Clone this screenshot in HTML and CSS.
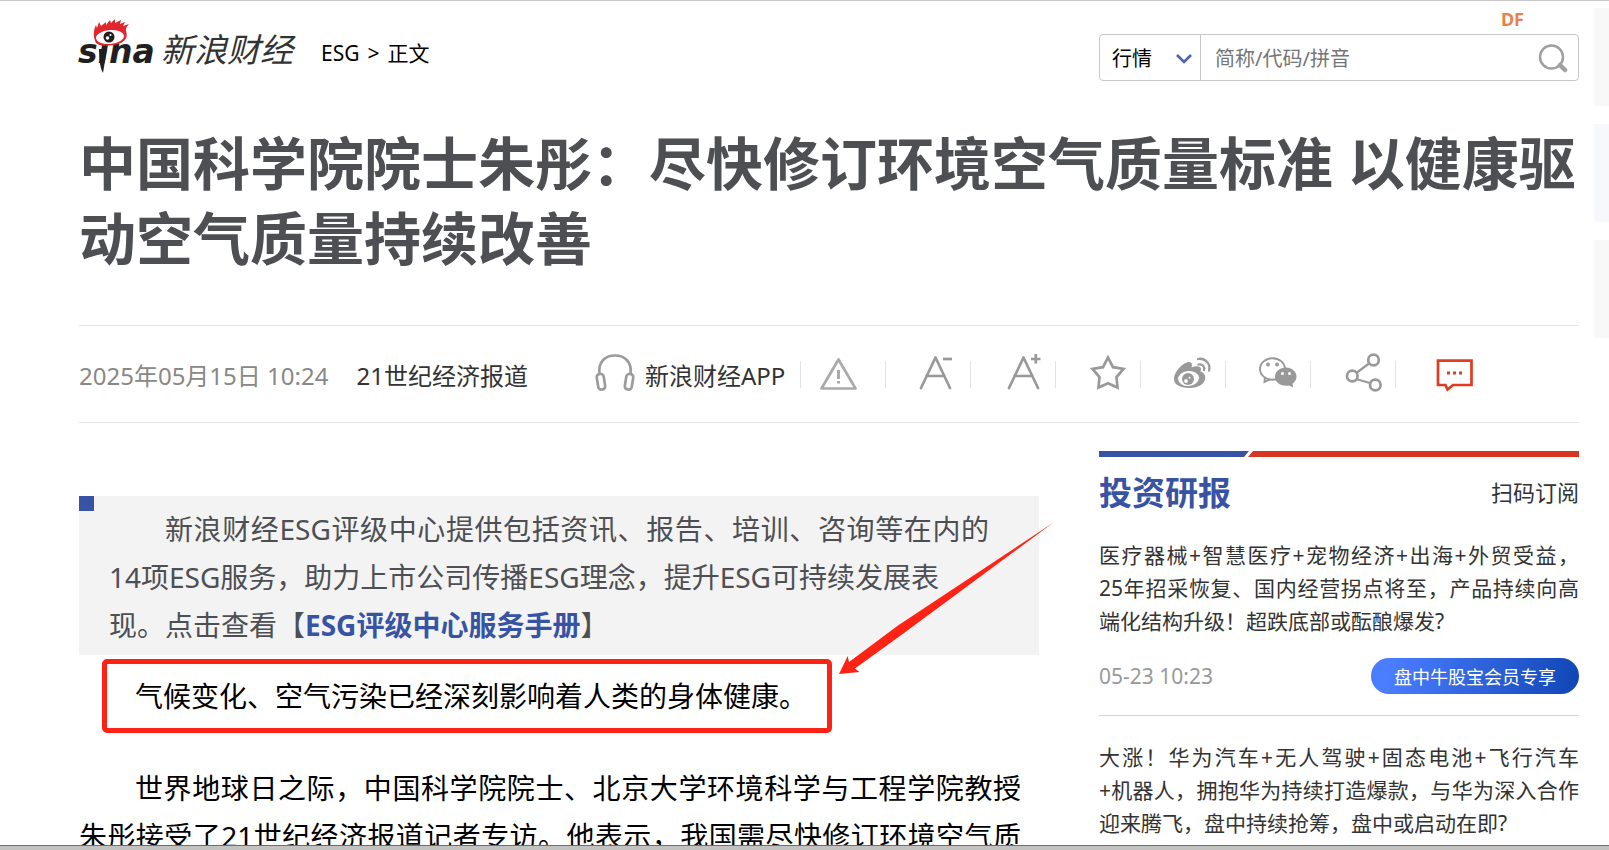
FILE: index.html
```html
<!DOCTYPE html>
<html lang="zh-CN">

<head>
    <meta charset="UTF-8">
    <meta name="viewport" content="width=device-width, initial-scale=1.0">
    <title>中国科学院院士朱彤：尽快修订环境空气质量标准 以健康驱动空气质量持续改善</title>
    <link rel="stylesheet" href="styles.css">
</head>

<body>

    <div class="page">
        <header class="header">
            <div class="brand">
                <a class="logo" href="#" aria-label="新浪财经">
                    <svg width="76" height="54" viewBox="0 0 76 54">
                        <text class="logo-text" x="-1" y="44">sina</text>
                        <path d="M20 30 L28 30 L24 54 Q20 48 20 30Z" fill="#231f20" />
                        <!-- eye -->
                        <path d="M17 24 C14 18 14 12 17 6 L18 9 L20 3 L22 7 L27 3 L27 6 L31 1 L32 4 L36 0 L36 4 L42 1 L41 5 L46 3 L44 7 L50 5 Q46 9 47 12 C50 20 44 26 30 26.500 C23 27 19 26 17 24Z" fill="#e1272c" />
                        <ellipse cx="31" cy="18" rx="14" ry="7" fill="#fff" transform="rotate(-5 31 18)" />
                        <circle cx="30" cy="18" r="5.500" fill="#231f20" />
                        <circle cx="28.500" cy="19" r="1.800" fill="#fff" />
                        <circle cx="31.500" cy="16" r="1" fill="#fff" />
                    </svg>
                    <span class="wordmark">新浪财经</span>
                </a>
                <nav class="crumbs"><a href="#">ESG</a><span>&gt;</span><span>正文</span></nav>
            </div>

            <form class="search">
                <div class="search-type">
                    <select aria-label="类型">
                        <option>行情</option>
                    </select>
                    <svg class="chevron" width="18" height="12" viewBox="0 0 18 12"><path d="M2 2 L9 9 L16 2" fill="none" stroke="#4a64b4" stroke-width="2.600" /></svg>
                </div>
                <input type="text" placeholder="简称/代码/拼音" aria-label="简称/代码/拼音">
                <button type="submit" aria-label="搜索">
                    <svg width="30" height="30" viewBox="0 0 30 30" fill="none" stroke="#a0a0a0">
                        <circle cx="13.500" cy="14" r="11.500" stroke-width="2.500" />
                        <path d="M22 22 L27 27" stroke-width="4.500" stroke-linecap="round" />
                    </svg>
                </button>
                <span class="mark">DF</span>
            </form>
        </header>

        <h1 class="title">中国科学院院士朱彤：尽快修订环境空气质量标准 以健康驱动空气质量持续改善</h1>

        <div class="meta">
            <div class="meta-info">
                <time>2025年05月15日 10:24</time>
                <a href="#">21世纪经济报道</a>
            </div>
            <a class="app" href="#">
                <svg width="40" height="48" viewBox="0 0 40 48" fill="none" stroke="#9c9c9c" stroke-width="2.700">
                    <path d="M4.500 24 C3 12 10 5.500 20 5.500 C30 5.500 37 12 35.500 24" />
                    <rect x="2.500" y="24" width="7" height="15.500" rx="3" transform="rotate(-9 6 32)" />
                    <rect x="30.500" y="24" width="7" height="15.500" rx="3" transform="rotate(9 34 32)" />
                </svg>
                <span>新浪财经APP</span>
            </a>
            <div class="tools">
                <button type="button" aria-label="举报">
                    <svg viewBox="0 0 85 48" fill="none" stroke="#aaa" stroke-width="2.700" stroke-linejoin="round">
                        <path d="M38.500 9.500 L55.500 38.500 H21.500 Z" />
                        <path d="M38.500 20 V29 M38.500 31 V33.500" stroke-width="3" />
                    </svg>
                </button>
                <button type="button" aria-label="缩小字体">
                    <svg viewBox="0 0 85 48" fill="none" stroke="#999" stroke-width="2.700" stroke-linecap="round" stroke-linejoin="round">
                        <path d="M36 38 L50.500 7.500 L65 38 M41.500 26 H59.500" />
                        <path d="M58 9 H67" stroke-linecap="butt" />
                    </svg>
                </button>
                <button type="button" aria-label="放大字体">
                    <svg viewBox="0 0 85 48" fill="none" stroke="#999" stroke-width="2.700" stroke-linecap="round" stroke-linejoin="round">
                        <path d="M39 38 L53.500 7.500 L68 38 M44.500 26 H62.500" />
                        <path d="M61 9 H70.500 M65.800 4 V13.500" stroke-linecap="butt" />
                    </svg>
                </button>
                <button type="button" aria-label="收藏">
                    <svg viewBox="0 0 85 48" fill="none" stroke="#999" stroke-width="2.700">
                        <path d="M53 7.500 L58 17.200 L68.500 19 L61.500 27 L62.500 37.500 L53 33.300 L43.500 37.500 L44.500 27 L37.500 19 L48 17.200 Z" />
                    </svg>
                </button>
                <button type="button" aria-label="分享到微博">
                    <svg viewBox="0 0 85 48">
                        <path d="M34 29 C34 21 44 12 49 12 C52 12 52.500 15 51.500 17.500 C56 15.500 61 15.500 61 19 C61 20.500 60 21 60.500 21.500 C69 24 67 38 49 38 C40 38 34 34.500 34 29Z" fill="#999" />
                        <ellipse cx="48.500" cy="28.500" rx="10.500" ry="7.500" fill="#fff" transform="rotate(-6 48 28)" />
                        <circle cx="48" cy="29" r="6" fill="#999" />
                        <circle cx="46" cy="31" r="1.900" fill="#fff" />
                        <circle cx="49.500" cy="27.800" r="1" fill="#fff" />
                        <path d="M58 9 C65 7.500 71 14 69 20.500 M58.500 14.500 C62.500 13.500 65 17 64 20" fill="none" stroke="#999" stroke-width="2.300" stroke-linecap="round" />
                    </svg>
                </button>
                <button type="button" aria-label="分享到微信">
                    <svg viewBox="0 0 85 48">
                        <path d="M40 26 L39.500 32 L45 29.500" fill="#fff" stroke="#999" stroke-width="1.900" />
                        <ellipse cx="47.500" cy="19" rx="12.500" ry="10.800" fill="#fff" stroke="#999" stroke-width="1.900" />
                        <circle cx="43" cy="14.500" r="1.900" fill="#999" />
                        <circle cx="52" cy="14.500" r="1.900" fill="#999" />
                        <path d="M61 17.500 C67 17.500 71.500 21.500 71.500 26.500 C71.500 29.500 70 32 67.500 33.800 L68 37.500 L64 35.500 C56 37 50 32.500 50 26.500 C50 21.500 55 17.500 61 17.500Z" fill="#999" />
                        <circle cx="57.500" cy="23.500" r="1.500" fill="#fff" />
                        <circle cx="64.500" cy="23.500" r="1.500" fill="#fff" />
                    </svg>
                </button>
                <button type="button" aria-label="分享">
                    <svg viewBox="0 0 85 48" fill="none" stroke="#999" stroke-width="2.700">
                        <circle cx="63.500" cy="10" r="5.300" />
                        <circle cx="42.300" cy="26" r="5.300" />
                        <circle cx="65.300" cy="35" r="5.300" />
                        <path d="M47 22.500 L59 13.500 M47.500 29.500 L60 33" stroke-width="2.200" />
                    </svg>
                </button>
                <button type="button" aria-label="评论">
                    <svg viewBox="0 0 85 48" fill="none" stroke="#e23c20" stroke-width="2.700">
                        <path d="M43 10.700 H76.500 V35 H58 L52.500 39.500 L50.500 35 H43 Z" />
                        <path d="M52 23 H55 M58 23 H61 M64 23 H67" stroke-width="3" />
                    </svg>
                </button>
            </div>
        </div>

        <div class="columns">
            <main class="article">
                <p class="intro">新浪财经ESG评级中心提供包括资讯、报告、培训、咨询等在内的14项ESG服务，助力上市公司传播ESG理念，提升ESG可持续发展表<br>现。点击查看【<a href="#">ESG评级中心服务手册</a>】</p>
                <p class="text marked">气候变化、空气污染已经深刻影响着人类的身体健康。</p>
                <p class="text">世界地球日之际，中国科学院院士、北京大学环境科学与工程学院教授朱彤接受了21世纪经济报道记者专访。他表示，我国需尽快修订环境空气质量标准。</p>
                <svg class="arrow" width="230" height="170" viewBox="0 0 230 170">
                    <path d="M9 164 L17.700 146 L19 152 L68 115.500 L223.500 12.500 L74 123 L25 158.500 L29.500 162 Z" fill="#ff2316" />
                </svg>
            </main>

            <aside class="sidebar">
                <svg class="bar" height="6" viewBox="0 0 480 6" preserveAspectRatio="none">
                    <path d="M0 0 H150 L145 6 H0Z" fill="#3853a4" />
                    <path d="M154 0 H480 V6 H149Z" fill="#d83522" />
                </svg>
                <div class="sidebar-head">
                    <h2>投资研报</h2>
                    <a href="#">扫码订阅</a>
                </div>
                <div class="report">
                    <a class="report-text" href="#">医疗器械+智慧医疗+宠物经济+出海+外贸受益，<span class="keep">25年</span>招采恢复、国内经营拐点将至，产品持续向高端化结构升级！超跌底部或酝酿爆发?</a>
                    <div class="report-foot">
                        <time>05-23 10:23</time>
                        <button type="button">盘中牛股宝会员专享</button>
                    </div>
                </div>
                <div class="report">
                    <a class="report-text" href="#">大涨！华为汽车+无人驾驶+固态电池+飞行汽车<span class="keep">+机器人</span>，拥抱华为持续打造爆款，与华为深入合作迎来腾飞，盘中持续抢筹，盘中或启动在即?</a>
                </div>
            </aside>
        </div>

        <div class="side-tabs">
            <span></span>
            <span class="blue"></span>
            <span></span>
        </div>
    </div>

    <div class="taskbar"></div>

</body>

</html>
```
FILE: styles.css
```css
*,
*::before {
    box-sizing: border-box;
}

body {
    margin: 0;
    height: 100vh;
    display: flex;
    flex-direction: column;
    overflow: hidden;
    background-color: #fff;
    color: #333;
    font-family: "Noto Sans", "Noto Sans CJK SC", sans-serif;
}

input,
select,
button {
    font-family: inherit;
}

button {
    border: 0;
    padding: 0;
    background: none;
    cursor: pointer;
}

a {
    color: inherit;
    text-decoration: none;
}

h1,
h2,
p {
    margin: 0;
}

svg {
    display: block;
}

.page {
    position: relative;
    flex: 1;
    min-height: 0;
    overflow: hidden;
    border-top: 1px solid #c8c8c8;
    padding: 18px 30px 0 79px;
}

/* header */
.header {
    display: flex;
    justify-content: space-between;
    align-items: flex-start;
}

.brand,
.logo {
    display: flex;
    align-items: center;
}

.logo {
    gap: 6px;
}

.logo svg {
    overflow: visible;
}

.logo-text {
    font: italic bold 33px "DejaVu Sans", sans-serif;
    fill: #231f20;
}

.wordmark {
    padding-top: 8px;
    font-size: 33px;
    line-height: 40px;
    font-style: italic;
}

.crumbs {
    display: flex;
    gap: 8px;
    margin-left: 28px;
    padding-top: 14px;
    font-size: 21px;
    line-height: 30px;
    color: #000;
}

.search {
    position: relative;
    display: flex;
    width: 480px;
    height: 47px;
    margin-top: 15px;
    border: 1px solid #c8c8c8;
    border-radius: 4px;
}

.search-type {
    position: relative;
    width: 101px;
    border-right: 1px solid #c8c8c8;
}

.search-type select {
    width: 100%;
    height: 100%;
    padding: 2px 12px 0;
    border: 0;
    background: none;
    appearance: none;
    font-size: 20px;
    color: #000;
}

.chevron {
    position: absolute;
    right: 7px;
    top: 18px;
    pointer-events: none;
}

.search input {
    flex: 1;
    min-width: 0;
    padding: 2px 14px 0;
    border: 0;
    background: none;
    font-size: 20px;
}

.search input::placeholder {
    color: #757575;
}

.search button {
    width: 50px;
    padding-left: 10px;
}

.mark {
    position: absolute;
    right: 54px;
    top: -28px;
    font-size: 18px;
    line-height: 24px;
    font-weight: bold;
    color: #e8824a;
}

/* title */
.title {
    margin: 45px 0 49px;
    font-size: 57px;
    line-height: 75px;
    color: #4d4f53;
}

.meta {
    display: flex;
    align-items: center;
    height: 98px;
    border-top: 1px solid #e3e3e3;
    border-bottom: 1px solid #e3e3e3;
    font-size: 24px;
}

.meta-info {
    display: flex;
    gap: 28px;
    width: 516px;
}

.meta-info time {
    color: #888;
}

.app {
    display: flex;
    align-items: center;
    gap: 10px;
    width: 205px;
    white-space: nowrap;
}

.tools {
    display: flex;
}

.tools button {
    position: relative;
    width: 85px;
    height: 48px;
}

.tools button::before {
    content: "";
    position: absolute;
    left: 0;
    top: 11px;
    height: 27px;
    border-left: 1px solid #e3e3e3;
}

/* content */
.columns {
    display: flex;
    justify-content: space-between;
    gap: 60px;
}

.article {
    position: relative;
    flex: 1;
    padding-top: 73px;
    font-size: 28px;
    line-height: 48px;
    color: #000;
}

.intro {
    position: relative;
    padding: 9px 50px 6px 30px;
    background-color: #f3f3f3;
    color: #4d4f53;
    text-indent: 2em;
    text-align: justify;
}

.intro::before {
    content: "";
    position: absolute;
    left: 0;
    top: 0;
    width: 15px;
    height: 15px;
    background-color: #3853a4;
}

.intro a {
    color: #3853a4;
    font-weight: bold;
}

.text {
    margin-bottom: 44px;
    padding-right: 18px;
    text-indent: 2em;
    text-align: justify;
}

.marked {
    position: relative;
    margin-top: 17px;
}

.marked::before {
    content: "";
    position: absolute;
    left: 23px;
    top: -13px;
    width: 730px;
    height: 74px;
    border: 5px solid #ff2316;
    border-radius: 5px;
}

.arrow {
    position: absolute;
    left: 751px;
    top: 87px;
}

/* sidebar */
.sidebar {
    width: 480px;
    padding-top: 28px;
}

.bar {
    width: 100%;
}

.sidebar-head {
    display: flex;
    justify-content: space-between;
    align-items: center;
    margin-top: 14px;
    line-height: 43px;
}

.sidebar-head h2 {
    font-size: 33px;
    color: #3853a4;
}

.sidebar-head a {
    font-size: 22px;
}

.report {
    padding: 25px 0 21px;
    border-bottom: 1px solid #d5d5d5;
    font-size: 21px;
}

.report-text {
    display: block;
    line-height: 33px;
    text-align: justify;
}

.keep {
    white-space: nowrap;
}

.report-foot {
    display: flex;
    justify-content: space-between;
    align-items: center;
    margin-top: 20px;
}

.report-foot time {
    color: #999;
}

.report-foot button {
    height: 36px;
    padding: 0 23px;
    border-radius: 18px;
    background: linear-gradient(100deg, #4a7dff 10%, #0f46b4);
    font-size: 18px;
    color: #fff;
}

/* tabs on the right edge of the window */
.side-tabs {
    position: absolute;
    right: 0;
    top: 7px;
    display: grid;
    gap: 18px;
}

.side-tabs span {
    width: 15px;
    height: 98px;
    background-color: #f8f8f8;
}

.side-tabs .blue {
    background-color: #f7f8fb;
}

.taskbar {
    height: 5px;
    border-top: 1px solid #6c6e6b;
    background-color: #c2c2c1;
}
```
